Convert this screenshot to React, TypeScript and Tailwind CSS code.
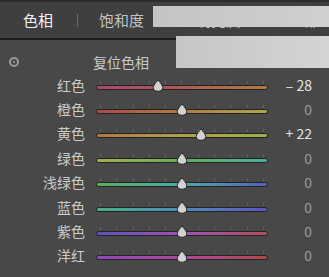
const rows = [
  { label: "红色", value: -28, track: "bg-linear-to-r from-[#ac4672] via-[#b05a52] to-[#b07a40]" },
  { label: "橙色", value: 0, track: "bg-linear-to-r from-[#ae4848] via-[#b07a42] to-[#b0a64a]" },
  { label: "黄色", value: 22, track: "bg-linear-to-r from-[#b07840] via-[#b0a04a] to-[#9eb04a]" },
  { label: "绿色", value: 0, track: "bg-linear-to-r from-[#a0b048] via-[#62ae58] to-[#48ae9e]" },
  { label: "浅绿色", value: 0, track: "bg-linear-to-r from-[#58b058] via-[#48aca8] to-[#5260b8]" },
  { label: "蓝色", value: 0, track: "bg-linear-to-r from-[#48ae88] via-[#4a8eb8] to-[#6052be]" },
  { label: "紫色", value: 0, track: "bg-linear-to-r from-[#6050be] via-[#a050b6] to-[#b04e5e]" },
  { label: "洋红", value: 0, track: "bg-linear-to-r from-[#9048b8] via-[#b0489e] to-[#b04848]" },
];

function Thumb() {
  return (
    <svg width="12" height="13" viewBox="0 0 12 13">
      <path
        d="M6 0.8 C7.5 3 10.8 6.4 10.8 8.6 C10.8 11 8.6 12.3 6 12.3 C3.4 12.3 1.2 11 1.2 8.6 C1.2 6.4 4.5 3 6 0.8 Z"
        fill="#d2d2d2"
        stroke="#2a2a2a"
        strokeWidth="1"
      />
    </svg>
  );
}

function Slider({ value, track }: { value: number; track: string }) {
  const left = 86 + (value / 100) * 86;
  return (
    <div className="relative w-[172px] h-full flex flex-col justify-center">
      <div className="flex justify-between px-[4px] h-[3px] mb-[1px]">
        {Array.from({ length: 11 }).map((_, i) => (
          <div key={i} className="w-px h-full bg-[#656565]" />
        ))}
      </div>
      <div className={`h-[5px] rounded-full border border-[#232323] ${track}`} />
      <div className="absolute top-[6px]" style={{ left: left - 6 }}>
        <Thumb />
      </div>
    </div>
  );
}

export default function App() {
  return (
    <div
      className="relative w-[329px] h-[277px] overflow-hidden bg-[#484848] border-t-2 border-[#2c2c2c]"
      style={{ fontFamily: '"Noto Sans CJK SC", "Noto Sans", sans-serif' }}
    >
      <div className="h-[38px] bg-[#3f3f3f] border-b-2 border-[#1c1c1c] flex items-center text-[15px]">
        <span className="ml-[23px] text-[#f2f2f2]">色相</span>
        <span className="ml-[24px] w-px h-[13px] bg-[#6a6a6a]" />
        <span className="ml-[21px] text-[#c4c4c4]">饱和度</span>
        <span className="ml-[52px] text-[#c4c4c4]">明亮度</span>
        <span className="ml-[48px] text-[#c4c4c4]">全部</span>
      </div>

      <div className="flex items-center h-[22px] mt-[11px] text-[14px] text-[#cacaca]">
        <span className="ml-[9px] w-[10px] h-[10px] rounded-full border-2 border-[#9a9a9a] flex items-center justify-center">
          <span className="w-[2px] h-[2px] rounded-full bg-[#9a9a9a]" />
        </span>
        <span className="ml-[74px]">复位色相</span>
      </div>

      <div className="flex flex-col">
        {rows.map((r) => (
          <div key={r.label} className="flex items-center h-[24.4px] text-[14px]">
            <span className="w-[85px] text-right text-[#cccccc]">{r.label}</span>
            <div className="ml-[11px] h-full">
              <Slider value={r.value} track={r.track} />
            </div>
            <span
              className={`w-[44px] text-right ${r.value === 0 ? "text-[#9a9a9a]" : "text-[#e4e4e4]"}`}
            >
              {r.value === 0 ? "0" : r.value > 0 ? `+ ${r.value}` : `– ${-r.value}`}
            </span>
          </div>
        ))}
      </div>

      <div className="absolute left-[153px] top-[4px] w-[176px] h-[21px] bg-linear-to-r from-[#c4c4c4] to-[#d0d0d0]" />
      <div className="absolute left-[176px] top-[34px] w-[153px] h-[32px] bg-linear-to-r from-[#c6c6c6] to-[#d4d4d4]" />
    </div>
  );
}
